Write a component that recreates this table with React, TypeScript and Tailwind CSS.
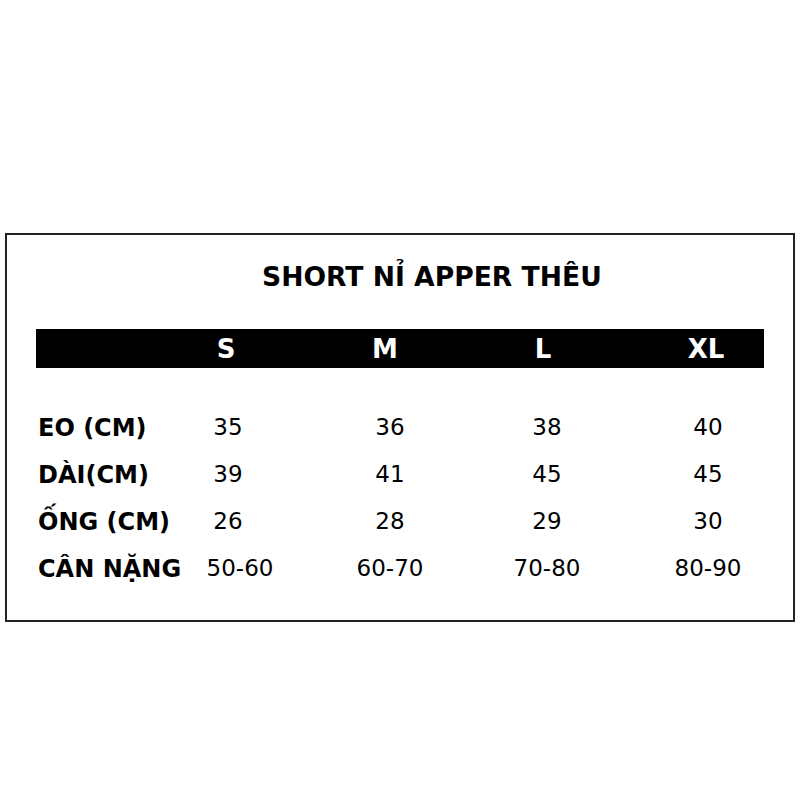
import React from "react";

const rows: { label: string; values: string[] }[] = [
  { label: "EO (CM)", values: ["35", "36", "38", "40"] },
  { label: "DÀI(CM)", values: ["39", "41", "45", "45"] },
  { label: "ỐNG (CM)", values: ["26", "28", "29", "30"] },
  { label: "CÂN NẶNG", values: ["50-60", "60-70", "70-80", "80-90"] },
];

export default function App() {
  return (
    <div
      className="w-[800px] h-[800px] bg-white text-black pt-[233px] px-[5px]"
      style={{ fontFamily: '"DejaVu Sans", Verdana, sans-serif' }}
    >
      <div className="w-[790px] h-[389px] border-2 border-[#222222] flex flex-col">
        <div className="mt-[27px] pl-[255px] text-[26.6px] leading-[30px] font-bold whitespace-nowrap">
          SHORT NỈ APPER THÊU
        </div>
        <div className="mt-[37px] ml-[29px] w-[728px] h-[39px] bg-black overflow-hidden">
          <div className="grid grid-cols-[112px_160px_164px_150px_172px] h-full items-center text-white font-bold text-[26px] leading-none">
            <div />
            <div className="text-center pr-[4px]">S</div>
            <div className="text-center pr-[10px]">M</div>
            <div className="text-center pr-[8px]">L</div>
            <div className="text-center pr-[4px]">XL</div>
          </div>
        </div>
        <div className="mt-[36px] ml-[29px] flex flex-col">
          {rows.map((r, i) => (
            <div
              key={r.label}
              className="grid grid-cols-[112px_160px_164px_150px_172px] h-[47px] items-center whitespace-nowrap"
            >
              <div className="pl-[2px] font-bold text-[24px] leading-none">{r.label}</div>
              {r.values.map((v, j) => (
                <div
                  key={j}
                  className={
                    "text-center text-[23px] leading-none " +
                    (i === 3 && j === 0 ? "pl-[24px]" : "")
                  }
                >
                  {v}
                </div>
              ))}
            </div>
          ))}
        </div>
      </div>
    </div>
  );
}
